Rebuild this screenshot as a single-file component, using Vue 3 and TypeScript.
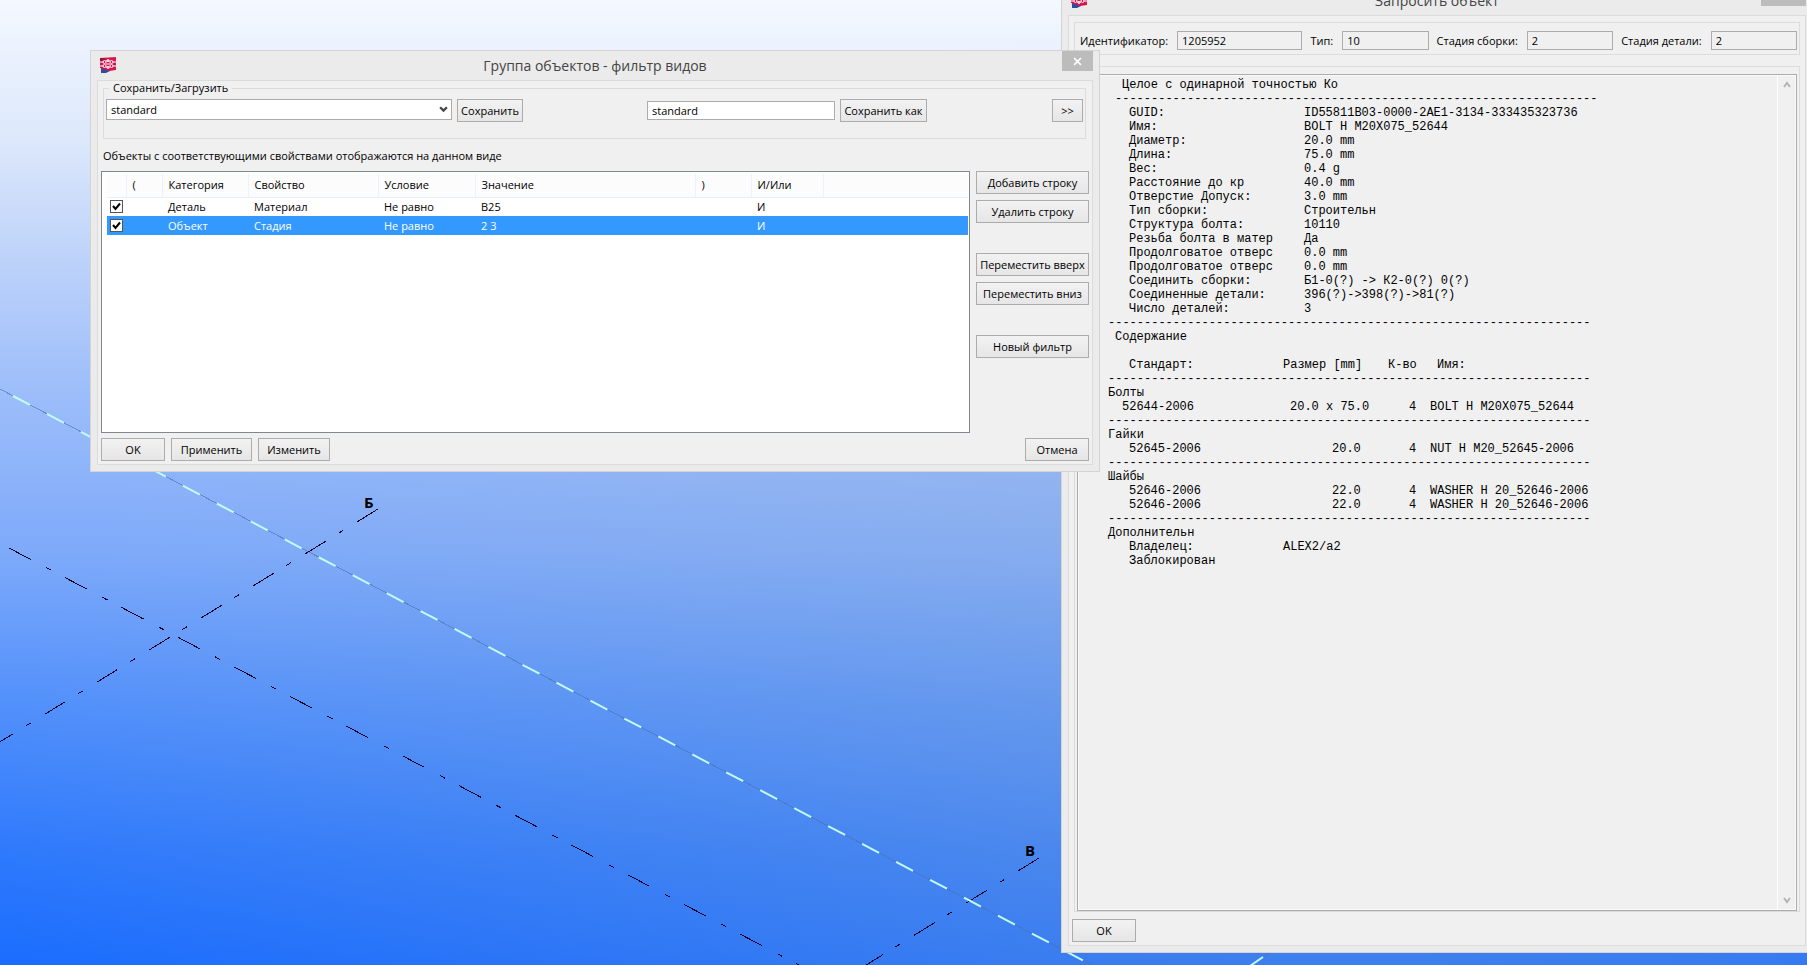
<script setup lang="ts">
import { ref } from 'vue'

interface FilterRow {
  enabled: boolean
  category: string
  property: string
  condition: string
  value: string
  logic: string
}

const rows = ref<FilterRow[]>([
  { enabled: true, category: 'Деталь', property: 'Материал', condition: 'Не равно', value: 'B25', logic: 'И' },
  { enabled: true, category: 'Объект', property: 'Стадия', condition: 'Не равно', value: '2 3', logic: 'И' },
])
const selected = ref(1)
const preset = ref('standard')
const saveName = ref('standard')

const fields = [
  { id: 'ident', label: 'Идентификатор:', value: '1205952', size: 'wide' },
  { id: 'type', label: 'Тип:', value: '10', size: '' },
  { id: 'asm', label: 'Стадия сборки:', value: '2', size: '' },
  { id: 'part', label: 'Стадия детали:', value: '2', size: '' },
]

// The report is laid out on 7px tab stops; a stop nearer than half a glyph is skipped.
type Cell = [col: number, text: string]
const CELL = 7
const GLYPH = 7.2
function line(...cells: Cell[]): string {
  let out = ''
  let x = 0
  for (const [col, text] of cells) {
    while (x < col * CELL) {
      let stop = (Math.floor(x / CELL) + 1) * CELL
      if (stop - x < GLYPH / 2) stop += CELL
      x = stop
      out += '\t'
    }
    out += text
    x += text.length * GLYPH
  }
  return out
}

const rule = '-'.repeat(67)
const pair = (name: string, value: string, col = 28) => line([3, name], [col, value])

const report = [
  line([2, 'Целое с одинарной точностью Ко']),
  line([1, rule]),
  pair('GUID:', 'ID55811B03-0000-2AE1-3134-333435323736'),
  pair('Имя:', 'BOLT H M20X075_52644'),
  pair('Диаметр:', '20.0 mm'),
  pair('Длина:', '75.0 mm'),
  pair('Вес:', '0.4 g'),
  pair('Расстояние до кр', '40.0 mm'),
  pair('Отверстие Допуск:', '3.0 mm'),
  pair('Тип сборки:', 'Строительн'),
  pair('Структура болта:', '10110'),
  pair('Резьба болта в матер', 'Да'),
  pair('Продолговатое отверс', '0.0 mm'),
  pair('Продолговатое отверс', '0.0 mm'),
  pair('Соединить сборки:', 'Б1-0(?) -> К2-0(?) 0(?)'),
  pair('Соединенные детали:', '396(?)->398(?)->81(?)'),
  pair('Число деталей:', '3'),
  rule,
  line([1, 'Содержание']),
  '',
  line([3, 'Стандарт:'], [25, 'Размер [mm]'], [40, 'К-во'], [47, 'Имя:']),
  rule,
  'Болты',
  line([2, '52644-2006'], [26, '20.0 x 75.0'], [43, '4'], [46, 'BOLT H M20X075_52644']),
  rule,
  'Гайки',
  line([3, '52645-2006'], [32, '20.0'], [43, '4'], [46, 'NUT H M20_52645-2006']),
  rule,
  'Шайбы',
  line([3, '52646-2006'], [32, '22.0'], [43, '4'], [46, 'WASHER H 20_52646-2006']),
  line([3, '52646-2006'], [32, '22.0'], [43, '4'], [46, 'WASHER H 20_52646-2006']),
  rule,
  'Дополнительн',
  pair('Владелец:', 'ALEX2/a2', 25),
  line([3, 'Заблокирован']),
].join('\n')
</script>

<template>
  <main class="desktop">
    <svg class="scene" aria-hidden="true">
      <g fill="none" shape-rendering="crispEdges">
        <path d="M0 389 L1120 980" stroke="#4a6fb0" stroke-opacity="0.6" />
        <path d="M1250 966 L1275 949" stroke="#4a6fb0" stroke-opacity="0.6" />
        <path d="M9 548 L810 971" stroke="#000022" stroke-dasharray="24.7 17.5 5.7 15.7" />
        <path d="M378 509 L-10 748" stroke="#000022" stroke-dasharray="24.4 16.5 5.5 14.8" />
        <path d="M1039 858 L850 975" stroke="#000022" stroke-dasharray="24.4 16.5 5.5 14.8" />
      </g>
      <path d="M13 396 L1120 980" fill="none" stroke="#c2fbf2" stroke-width="2" stroke-dasharray="19.2 19.2" />
      <path d="M1250 966 L1263 957" fill="none" stroke="#c2fbf2" stroke-width="2" />
      <text x="364" y="508" class="axis">Б</text>
      <text x="1025" y="856" class="axis">В</text>
    </svg>

    <section class="window inquiry" aria-label="Запросить объект">
      <header class="titlebar">
        <svg class="logo" viewBox="0 0 16 16" aria-hidden="true">
          <path d="M1 9h9v5l-4 2H1z" fill="#2a4fa0" />
          <path d="M0 1 16 0v13l-7 1-9-3z" fill="#d8154f" />
          <path d="M0 1h5v3L0 6z" fill="#a8103c" />
          <g fill="none" stroke="#fff">
            <path d="M0 5h3M13 5h3M0 9h3M13 9h3M6 4h4M6 10h4M6 7h4" />
            <circle cx="4.5" cy="5" r="1.5" /><circle cx="11.5" cy="5" r="1.5" />
            <circle cx="4.5" cy="9" r="1.5" /><circle cx="11.5" cy="9" r="1.5" />
            <circle cx="8" cy="3.5" r="1" /><circle cx="8" cy="10.5" r="1" />
          </g>
        </svg>
        <h1>Запросить объект</h1>
        <button class="close" type="button" aria-label="Закрыть окно запроса"></button>
      </header>
      <div class="client inquiry-client">
        <div class="group fields">
          <template v-for="f in fields" :key="f.id">
            <label :for="f.id">{{ f.label }}</label>
            <input :id="f.id" :class="['text', 'readonly', f.size]" type="text" :value="f.value" readonly />
          </template>
        </div>
        <div class="group report-group">
          <div class="report-box">
            <textarea class="report" aria-label="Свойства объекта" readonly wrap="off" :value="report"></textarea>
            <div class="scroll">
              <button type="button" aria-label="Вверх">
                <svg viewBox="0 0 8 8" aria-hidden="true"><path d="M1 6l3-4 3 4" fill="none" stroke="#b4b4b4" stroke-width="2" /></svg>
              </button>
              <button type="button" aria-label="Вниз">
                <svg viewBox="0 0 8 8" aria-hidden="true"><path d="M1 2l3 4 3-4" fill="none" stroke="#b4b4b4" stroke-width="2" /></svg>
              </button>
            </div>
          </div>
        </div>
        <div class="actions inquiry-actions">
          <button class="btn w64" type="button">OK</button>
        </div>
      </div>
    </section>

    <section class="window filter" aria-label="Группа объектов - фильтр видов">
      <header class="titlebar">
        <svg class="logo" viewBox="0 0 16 16" aria-hidden="true">
          <path d="M1 9h9v5l-4 2H1z" fill="#2a4fa0" />
          <path d="M0 1 16 0v13l-7 1-9-3z" fill="#d8154f" />
          <path d="M0 1h5v3L0 6z" fill="#a8103c" />
          <g fill="none" stroke="#fff">
            <path d="M0 5h3M13 5h3M0 9h3M13 9h3M6 4h4M6 10h4M6 7h4" />
            <circle cx="4.5" cy="5" r="1.5" /><circle cx="11.5" cy="5" r="1.5" />
            <circle cx="4.5" cy="9" r="1.5" /><circle cx="11.5" cy="9" r="1.5" />
            <circle cx="8" cy="3.5" r="1" /><circle cx="8" cy="10.5" r="1" />
          </g>
        </svg>
        <h1>Группа объектов - фильтр видов</h1>
        <button class="close" type="button" aria-label="Закрыть">
          <svg viewBox="0 0 8 8" aria-hidden="true"><path d="M1 1l6 6M7 1L1 7" stroke="#fff" stroke-width="1.4" /></svg>
        </button>
      </header>
      <div class="client filter-client">
        <fieldset class="group saver">
          <legend>Сохранить/Загрузить</legend>
          <div class="saver-row">
            <div class="combo">
              <select v-model="preset" aria-label="Сохранённый фильтр">
                <option value="standard">standard</option>
              </select>
              <svg viewBox="0 0 8 8" aria-hidden="true"><path d="M1 2l3 3 3-3" fill="none" stroke="#444" stroke-width="2" /></svg>
            </div>
            <button class="btn w66" type="button">Сохранить</button>
            <input v-model="saveName" class="text name" type="text" aria-label="Имя фильтра" />
            <button class="btn w87" type="button">Сохранить как</button>
            <button class="btn w31 more" type="button">&gt;&gt;</button>
          </div>
        </fieldset>
        <p class="note">Объекты с соответствующими свойствами отображаются на данном виде</p>
        <div class="body">
          <div class="list">
            <table>
              <colgroup>
                <col class="c-check" /><col class="c-open" /><col class="c-cat" /><col class="c-prop" />
                <col class="c-cond" /><col class="c-val" /><col class="c-close" /><col class="c-logic" /><col />
              </colgroup>
              <thead>
                <tr>
                  <th></th><th>(</th><th>Категория</th><th>Свойство</th><th>Условие</th>
                  <th>Значение</th><th>)</th><th>И/Или</th><th></th>
                </tr>
              </thead>
              <tbody>
                <tr v-for="(r, i) in rows" :key="i" :class="{ selected: i === selected }" @click="selected = i">
                  <td><input v-model="r.enabled" type="checkbox" :aria-label="r.category" /></td>
                  <td></td>
                  <td>{{ r.category }}</td>
                  <td>{{ r.property }}</td>
                  <td>{{ r.condition }}</td>
                  <td>{{ r.value }}</td>
                  <td></td>
                  <td>{{ r.logic }}</td>
                  <td></td>
                </tr>
              </tbody>
            </table>
          </div>
          <div class="side">
            <div class="stack">
              <button class="btn" type="button">Добавить строку</button>
              <button class="btn" type="button">Удалить строку</button>
            </div>
            <div class="stack">
              <button class="btn" type="button">Переместить вверх</button>
              <button class="btn" type="button">Переместить вниз</button>
            </div>
            <button class="btn" type="button">Новый фильтр</button>
          </div>
        </div>
        <div class="actions">
          <button class="btn w64" type="button">OK</button>
          <button class="btn w81" type="button">Применить</button>
          <button class="btn w72" type="button">Изменить</button>
          <button class="btn w64 cancel" type="button">Отмена</button>
        </div>
      </div>
    </section>
  </main>
</template>

<style>
html,
body,
#app {
  height: 100%;
}
body {
  margin: 0;
  overflow: hidden;
}
</style>

<style scoped>
* {
  box-sizing: border-box;
}
.desktop {
  position: relative;
  height: 100%;
  overflow: hidden;
  background:
    radial-gradient(ellipse 75% 85% at 75% 85%, rgba(175, 185, 184, 0.28), rgba(175, 185, 184, 0)),
    linear-gradient(#f4f8ff 0%, #dbe7fb 15%, #b8cffa 29%, #9cbdfa 41%, #7eaafa 57%, #5290fb 73%, #2f7afc 88%, #1b6dfe 100%);
  font-family: 'Open Sans', 'Noto Sans', sans-serif;
  font-size: 11px;
  line-height: 16px;
  color: #000;
}
.scene {
  position: absolute;
  inset: 0;
  width: 100%;
  height: 100%;
}
.axis {
  font-size: 15px;
  font-weight: 700;
}
button,
input,
select {
  font: inherit;
  color: inherit;
  border-radius: 0;
  margin: 0;
}
.window {
  position: absolute;
  display: flex;
  flex-direction: column;
  padding: 0 6px 6px;
  background: #ebebeb;
  border: 1px solid #d4d4d4;
}
.filter {
  left: 90px;
  right: 707px;
  top: 50px;
}
.inquiry {
  left: 1061px;
  right: -6px;
  top: -15px;
  bottom: 12px;
}
.titlebar {
  display: grid;
  grid-template-columns: 1fr auto 1fr;
  align-items: start;
  height: 29px;
}
.logo {
  width: 16px;
  height: 16px;
  margin: 6px 0 0 3px;
}
h1 {
  margin: 0;
  font-size: 14px;
  line-height: 30px;
  font-weight: 400;
  color: #444;
}
.close {
  justify-self: end;
  width: 31px;
  height: 20px;
  padding: 0;
  border: 0;
  background: #bcbcbc;
}
.inquiry .close {
  width: 45px;
}
.close svg {
  display: block;
  width: 9px;
  height: 9px;
  margin: 0 auto;
}
.client {
  background: #f0f0f0;
  border: 1px solid #dcdcdc;
}
.group {
  border: 1px solid #dcdcdc;
  margin: 0;
}
.btn {
  height: 23px;
  padding: 0;
  border: 1px solid #acacac;
  background: linear-gradient(#f2f2f2, #e6e6e6);
  white-space: nowrap;
  text-align: center;
}
.w31 { width: 31px; }
.w64 { width: 64px; }
.w66 { width: 66px; }
.w72 { width: 72px; }
.w81 { width: 81px; }
.w87 { width: 87px; }
.text {
  height: 19px;
  padding: 0 4px;
  border: 1px solid #acacac;
  background: #fff;
  min-width: 0;
}
.filter-client {
  display: flex;
  flex-direction: column;
  padding: 0 3px;
}
.saver {
  height: 58px;
  margin: 0 3px 0 2px;
  padding: 0 2px;
}
.saver legend {
  margin-left: 3px;
  padding: 0 4px;
  line-height: 14px;
}
.saver-row {
  display: flex;
  align-items: center;
  gap: 5px;
  margin-top: 4px;
}
.combo {
  position: relative;
  align-self: flex-start;
  width: 346px;
  height: 21px;
}
.combo select {
  appearance: none;
  display: block;
  width: 100%;
  height: 100%;
  padding: 0 4px;
  border: 1px solid #acacac;
  background: #fff;
}
.combo svg {
  position: absolute;
  right: 4px;
  top: 6px;
  width: 9px;
  height: 9px;
  pointer-events: none;
}
.name {
  width: 188px;
  margin-left: 119px;
}
.more {
  margin-left: auto;
}
.note {
  margin: 9px 2px 7px;
}
.body {
  display: flex;
  gap: 6px;
}
.list {
  flex: 1;
  min-height: 262px;
  padding: 2px 1px 2px 5px;
  border: 1px solid #828790;
  background: #fff;
}
table {
  width: 100%;
  table-layout: fixed;
  border-collapse: collapse;
}
.c-check { width: 19px; }
.c-open { width: 36px; }
.c-cat { width: 86px; }
.c-prop { width: 130px; }
.c-cond { width: 97px; }
.c-val { width: 220px; }
.c-close { width: 56px; }
.c-logic { width: 72px; }
th {
  height: 23px;
  padding: 0 0 0 6px;
  font-weight: 400;
  text-align: left;
  background: #fcfcfc;
  border-right: 1px solid #ebf2fa;
  border-bottom: 1px solid #ebf0f5;
}
th:last-child {
  border-right: 0;
}
td {
  height: 19px;
  padding: 0 0 0 6px;
}
td:first-child {
  padding: 0 0 0 3px;
}
.selected {
  background: #3399ff;
  color: #fff;
}
input[type='checkbox'] {
  appearance: none;
  display: block;
  width: 13px;
  height: 13px;
  border: 1px solid #555;
  background: #fff;
}
input[type='checkbox']:checked {
  background: #fff
    url("data:image/svg+xml,%3Csvg xmlns='http://www.w3.org/2000/svg' viewBox='0 0 11 11'%3E%3Cpath d='M2 5l2.5 3L9 2.5' fill='none' stroke='%23000' stroke-width='2'/%3E%3C/svg%3E");
}
.side {
  display: flex;
  flex-direction: column;
  gap: 30px;
  width: 113px;
}
.stack {
  display: flex;
  flex-direction: column;
  gap: 6px;
}
.actions {
  display: flex;
  gap: 6px;
  padding: 5px 0 3px;
}
.cancel {
  margin-left: auto;
}
.inquiry-client {
  flex: 1;
  min-height: 0;
  display: flex;
  flex-direction: column;
  padding: 6px 5px 0 3px;
}
.fields {
  display: flex;
  align-items: center;
  height: 33px;
  margin-left: 2px;
  padding: 4px 2px 0 5px;
}
.fields label {
  white-space: nowrap;
  margin-right: 9px;
}
.readonly {
  flex: 86 1 0;
  margin-right: 8px;
  background: #f0f0f0;
}
.wide {
  flex-grow: 130;
}
.readonly:last-child {
  margin-right: 0;
}
.report-group {
  flex: 1;
  min-height: 0;
  margin: 11px 0 2px 2px;
  padding: 7px 2px 0;
}
.report-box {
  display: flex;
  height: 100%;
  padding: 1px;
  border: 1px solid #acacac;
  outline: 1px solid #fafafa;
  outline-offset: -2px;
}
.report {
  flex: 1;
  min-width: 0;
  padding: 2px 0 0 29px;
  border: 0;
  resize: none;
  overflow: hidden;
  background: #f0f0f0;
  font-family: 'Liberation Mono', monospace;
  font-size: 12px;
  line-height: 14px;
  tab-size: 7px;
}
.scroll {
  display: flex;
  flex-direction: column;
  justify-content: space-between;
  width: 18px;
  border-left: 1px solid #fff;
}
.scroll button {
  height: 18px;
  padding: 0;
  border: 0;
  background: transparent;
}
.scroll svg {
  width: 8px;
  height: 8px;
}
</style>
